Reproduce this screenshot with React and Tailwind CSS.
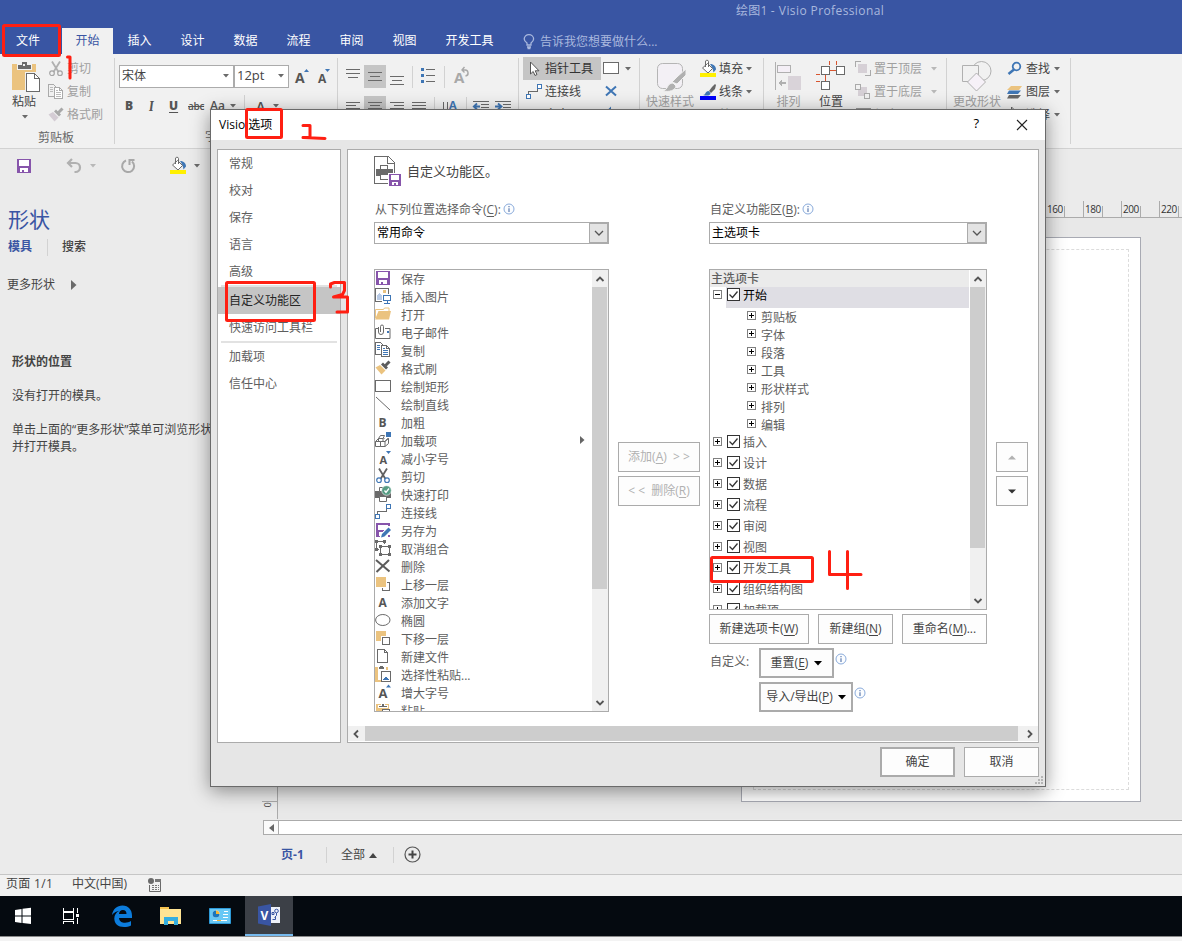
import React from "react";

const G = "#6a6a6a";
const B = "#3f76b5";
const O = "#ebc37f";
const P = "#8755ab";

function Svg({ w = 16, h = 16, className = "", children, crisp = true }) {
  return (
    <svg width={w} height={h} viewBox={`0 0 ${w} ${h}`} fill="none" shapeRendering={crisp ? "crispEdges" : "auto"} className={"shrink-0 overflow-visible " + className}>
      {children}
    </svg>
  );
}

const Down = ({ c = "#6a6a6a", className = "" }) => (
  <Svg w={6} h={4} className={className} crisp={false}><path d="M0 0h6L3 3.5z" fill={c} /></Svg>
);

const Sep = ({ className = "" }) => <div className={"w-px shrink-0 bg-[#d2d2d2] " + className} />;

const saveShape = (
  <>
    <path d="M1 1h14v14H1z" fill={P} />
    <path d="M3 2h10v6H3z" fill="#fff" />
    <path d="M4 10h8v4H4z" fill="#fff" />
    <path d="M6 12h2v3H6zM4 14h8v1H4z" fill={P} />
  </>
);

function Scissors({ a = "#606060", b = B }) {
  return (
    <Svg crisp={false}>
      <path d="M4 0.5l6.5 10.5M12 0.5L5.5 11" stroke={a} strokeWidth="1.8" />
      <circle cx="4" cy="12.2" r="2.3" stroke={b} strokeWidth="1.2" />
      <circle cx="12" cy="12.2" r="2.3" stroke={b} strokeWidth="1.2" />
    </Svg>
  );
}

function Copy({ a = G, b = B }) {
  return (
    <Svg>
      <path d="M6.5 12.5h-6v-12h5l3 3" stroke={a} />
      <path d="M6.5 3.5h5l3 3v8h-8z" stroke={a} fill="#fff" />
      <path d="M11.5 3.5v3h3" stroke={a} />
      <path d="M2 3.5h3M2 5.5h3M2 7.5h3M8 6.5h2M8 8.5h5M8 10.5h5M8 12.5h5" stroke={b} />
    </Svg>
  );
}

function Brush({ a = "#5c5c5c", b = O }) {
  return (
    <Svg crisp={false}>
      <path d="M.5 7.500L5 5l5.500 5.500L6.500 14.500z" fill={b} />
      <path d="M6 4.500l2-2L13 7.500l-2 2z" fill={a} />
      <path d="M10.500 3.500l1 1L14.500 1.500M11.500 4.500l3-3" stroke={a} strokeWidth="3" />
    </Svg>
  );
}

const Connector = () => (
  <Svg>
    <path d="M2.500 10V7.500h9V5" stroke="#6a6a6a" />
    <path d="M0.500 10.500h4v4h-4zM11.500 0.500h4v4h-4z" stroke={B} fill="#fff" />
  </Svg>
);

const letter = (t, x, y, s) => (
  <text x={x} y={y} fontSize={s} fontWeight="700" fill="#555" fontFamily="Open Sans, sans-serif">{t}</text>
);

const ICONS = {
  save: <Svg>{saveShape}</Svg>,
  pic: (
    <Svg>
      <path d="M7 13.500H.500v-13h13v5" stroke={G} />
      <path d="M8 2h3v3H8z" fill={O} />
      <path d="M2 12V8l2-3 3 3v4z" fill="#b9cbe6" />
      <path d="M8.500 7.500h7v5h-7zM12 13v2M9 15.500h6" stroke={B} fill="#fff" />
    </Svg>
  ),
  open: (
    <Svg crisp={false}>
      <path d="M.5 12V3.500h8l1-1.500h4.500v3" stroke={O} />
      <path d="M0 13.500L3.500 5H16l-2 8.500z" fill={O} />
    </Svg>
  ),
  mail: (
    <Svg crisp={false}>
      <path d="M3 4.500H.500v10h14.500V4.500H10" stroke={G} />
      <path d="M12 7h2v2h-2z" fill={B} />
      <path d="M3.500 3v5a2.500 2.500 0 0 0 5 0V2.500a1.500 1.500 0 0 0-3 0V8" stroke={G} />
    </Svg>
  ),
  copy: <Copy />,
  brush: <Brush />,
  rect: <Svg><path d="M.5 2.500h15v11H.5z" stroke={G} /></Svg>,
  line: <Svg crisp={false}><path d="M1 1l14 13" stroke={G} /></Svg>,
  bold: <Svg crisp={false}>{letter("B", 3.5, 13, 12)}</Svg>,
  addin: (
    <Svg crisp={false}>
      <path d="M.5 9.500h5v5h-5zM5.500 9.500h4.500v5H5.500zM3.500 9.500v-3l2-3h4l-1.500 3v3M.5 9.500l3-3h4.500M8.500 6.500h1M10 14.500l3.500-3v-5l-3.500 3M10 9.500l2.500-3h1" stroke={G} />
      <path d="M11 0h5v5h-5z" fill={B} />
    </Svg>
  ),
  shrink: <Svg crisp={false}>{letter("A", 4.5, 14, 11)}<path d="M11 1h5l-2.500 3z" fill={B} /></Svg>,
  cut: <Scissors />,
  qprint: (
    <Svg crisp={false}>
      <path d="M0 5h16v7H0z" fill="#6a6a6a" />
      <path d="M4.500 1.500h6v4h-6zM4.500 10.500h7v5h-7z" stroke={G} fill="#fff" />
      <circle cx="11.500" cy="4.500" r="4.800" fill="#569c84" stroke="#fff" strokeWidth=".6" />
      <path d="M9.500 4.500l1.500 2 3-4" stroke="#fff" strokeWidth="1.300" />
    </Svg>
  ),
  conn: <Connector />,
  saveas: (
    <Svg>
      <path d="M1 1h14v14H1z" fill={P} /><path d="M3 3h10v5H3zM4 10h6v4H4z" fill="#fff" />
      <path d="M5 15l1-4 8-8 2 3v9z" fill="#fff" /><path d="M6 15.500l1-3.500 6.500-6.500 2.500 2.500-6.500 6.500z" fill={B} shapeRendering="auto" />
      <path d="M13 13h2v2h-2z" fill={P} />
    </Svg>
  ),
  ungroup: (
    <Svg>
      <path d="M4 9.500H1.500v-8h8v2M5.500 6.500h9v8h-9z" stroke={G} />
      <path d="M0 0h3v3H0zM8 0h3v3H8zM0 8h3v3H0zM4 5h3v3H4zM13 5h3v3h-3zM4 13h3v3H4zM13 13h3v3h-3z" fill={G} />
    </Svg>
  ),
  del: <Svg crisp={false}><path d="M1 2L14.500 13.500M1.500 14L14 2" stroke="#5c5c5c" strokeWidth="2" /></Svg>,
  fwd: <Svg><path d="M1 1h10v10H1z" fill={O} /><path d="M12 6.500h2.500v8h-7V12" stroke={G} /></Svg>,
  text: <Svg crisp={false}>{letter("A", 3.5, 13, 12)}</Svg>,
  oval: <Svg crisp={false}><ellipse cx="7.800" cy="8" rx="7.200" ry="5.500" stroke={G} /></Svg>,
  back: <Svg><path d="M1 1h10v5H6v5H1z" fill={O} /><path d="M7.500 7.500h7v7h-7z" stroke={G} /></Svg>,
  file: <Svg><path d="M2.500 1.500h7l3 3v10h-10zM9.500 1.500v3h3" stroke={G} /></Svg>,
  pastesp: (
    <Svg>
      <path d="M0 1h3v13h3v2H0zM11 1h2v3h-2z" fill={O} /><path d="M4 1l2-1 3 1v2H4z" fill={G} />
      <path d="M6.500 5.500h9v10h-9z" stroke={G} fill="#fff" /><path d="M8 14l3-4 3 4z" fill={B} />
    </Svg>
  ),
  grow: <Svg crisp={false}>{letter("A", 3.5, 14, 13)}<path d="M11 3.500h5L13.500.5z" fill={B} /></Svg>,
  paste: (
    <Svg><path d="M1 2h13v14H1z" fill={O} /><path d="M3 5V3h3V1h3v2h3v2z" fill={G} stroke="#fff" /><path d="M7.500 7.500h7v8h-7z" stroke={G} fill="#fff" /></Svg>
  ),
};

const COMMANDS = [
  ["save", "保存"], ["pic", "插入图片"], ["open", "打开"], ["mail", "电子邮件"], ["copy", "复制"], ["brush", "格式刷"],
  ["rect", "绘制矩形"], ["line", "绘制直线"], ["bold", "加粗"], ["addin", "加载项"], ["shrink", "减小字号"], ["cut", "剪切"],
  ["qprint", "快速打印"], ["conn", "连接线"], ["saveas", "另存为"], ["ungroup", "取消组合"], ["del", "删除"], ["fwd", "上移一层"],
  ["text", "添加文字"], ["oval", "椭圆"], ["back", "下移一层"], ["file", "新建文件"], ["pastesp", "选择性粘贴..."], ["grow", "增大字号"],
  ["paste", "粘贴"],
];

const Bars = ({ lines, c = "#6a6a6a" }) => (
  <Svg w={14} h={14}>
    {lines.map(([x, y, w], i) => <rect key={i} x={x} y={y} width={w} height="1" fill={c} />)}
  </Svg>
);

function TitleBar() {
  return (
    <header className="h-[54px] shrink-0 bg-[#3955a3] text-white">
      <div className="flex h-[28px] items-start pl-[736px] pt-[3px] text-[12px] leading-4 text-[#a9b8de]">
        <span className="tracking-[0.2px]">绘图1 - </span><span className="ml-1 tracking-[0.4px]">Visio Professional</span>
      </div>
      <div className="flex h-[26px] items-center pb-px text-[12px]">
        <div className="w-[62px] pr-[6px] text-center">文件</div>
        <div className="-mb-px flex h-[26px] w-[51px] items-center justify-center bg-[#f1f1f1] pb-px text-[#3955a3]">开始</div>
        {["插入", "设计", "数据", "流程", "审阅", "视图"].map((t) => <div key={t} className="w-[53px] text-center">{t}</div>)}
        <div className="w-[77px] text-center">开发工具</div>
        <Svg w={12} h={16} className="mt-[2px] ml-[15px]" crisp={false}>
          <path d="M4 11V9C2 7.500 1.200 6.500 1.200 5a4.600 4.300 0 0 1 9.400 0c0 1.500-.8 2.500-2.600 4v2zM4 13h4M4.500 14.500h3" stroke="#a9b8de" strokeWidth="1.300" />
        </Svg>
        <span className="mt-[2px] ml-[5px] text-[#a9b8de]">告诉我您想要做什么...</span>
      </div>
    </header>
  );
}

const Row = ({ icon, text, dis, arrow, className = "" }) => (
  <div className={"flex h-[23px] items-center " + (dis ? "text-[#a0a0a0] " : "") + className}>
    {icon}
    <span className="ml-[3px] whitespace-nowrap">{text}</span>
    {arrow && <Down c={dis ? "#b8b8b8" : "#6a6a6a"} className={arrow} />}
  </div>
);

const PaintIcon = ({ bar, brush }) => (
  <Svg crisp={false}>
    {brush ? (
      <>
        <path d="M15 0l1 1-1 4-4 4-2-2 3-4z" fill="#666" />
        <path d="M3 11c3 0 2-4 5.500-4l2 2c0 3-4 3-7.500 2z" fill={B} />
      </>
    ) : (
      <>
        <path d="M10 3c4 0 6 2.500 6 5.500L13.500 11.500C13 8 12 6 10 3z" fill={B} />
        <path d="M2.500 7l5-4.500 5 5-4.500 4.500zM5.500 6V1a1.500 1.500 0 0 1 3-.5V6" fill="#fff" stroke="#6a6a6a" />
      </>
    )}
    <path d="M0 12h16v4H0z" fill={bar} />
  </Svg>
);

function Ribbon() {
  return (
    <section className="flex h-[95px] shrink-0 border-b border-[#d2d2d2] bg-[#f1f1f1] text-[12px] text-[#444]">
      {/* clipboard */}
      <div className="flex w-[114px] flex-col pt-[3px]">
        <div className="flex h-[69px]">
          <div className="flex w-[48px] flex-col items-center">
            <Svg w={30} h={36} className="ml-[4px]">
              <path d="M1 7h24v26H1z" fill={O} />
              <path d="M6 12V7h4V4h6v3h4v5z" fill="#6a6a6a" stroke="#f1f1f1" />
              <path d="M12 7h2v2h-2z" fill="#f1f1f1" />
              <path d="M14 15h11v18H14z" fill="#f1f1f1" />
              <path d="M15.500 16.500h8l5 5v13h-13z" fill="#fff" stroke="#6a6a6a" />
              <path d="M23.500 16.500v5h5" stroke="#6a6a6a" />
            </Svg>
            <span className="mt-px leading-4">粘贴</span>
            <Down className="mt-[5px] ml-[2px]" />
          </div>
          <div>
            <Row dis icon={<Scissors a="#b0b0b0" b="#a5a5a5" />} text="剪切" />
            <Row dis icon={<Copy a="#aaa" b="#bbb" />} text="复制" />
            <Row dis icon={<Brush a="#a8a8a8" b="#d4ccd4" />} text="格式刷" />
          </div>
        </div>
        <div className="mt-px flex h-[22px] items-center justify-center pr-[2px] text-[#666]">剪贴板</div>
      </div>
      <Sep className="mt-1 h-[86px]" />
      {/* font */}
      <div className="flex w-[222px] flex-col">
        <div className="flex h-[34px] items-end pl-1">
          <div className="flex h-[23px] w-[115px] items-center justify-between border border-[#ababab] bg-white pr-[4px] pl-[2px]">宋体<Down /></div>
          <div className="flex h-[23px] w-[55px] items-center justify-between border border-[#ababab] bg-white pr-[4px] pl-[2px] text-[13px]">12pt<Down /></div>
          <Svg w={16} h={18} className="mb-[2px] ml-[6px]" crisp={false}>{letter("A", 0, 15, 14)}<path d="M9 4h5l-2.500-3z" fill={B} /></Svg>
          <Svg w={16} h={18} className="mb-[2px] ml-[7px]" crisp={false}>{letter("A", 0, 15, 12)}<path d="M7 1h5l-2.500 3z" fill={B} /></Svg>
        </div>
        <div className="mt-[7px] flex h-[24px] items-center pl-[10px] font-semibold text-[#555]">
          <b className="w-[10px]">B</b>
          <b className="ml-[14px] w-[8px] font-serif text-[13px] italic">I</b>
          <b className="ml-[12px] w-[9px] underline underline-offset-2">U</b>
          <span className="ml-[10px] w-[17px] text-[10px] tracking-[-0.3px] line-through">abc</span>
          <span className="ml-[5px] w-[16px]">Aa</span>
          <Down className="ml-[4px]" />
          <Sep className="ml-[8px] h-[22px]" />
          <span className="ml-[11px] text-[14px]">A</span>
          <Down className="ml-[8px]" />
        </div>
        <div className="mt-[8px] flex h-[22px] items-center justify-center pr-[18px] text-[#666]">字体</div>
      </div>
      <Sep className="mt-1 h-[86px]" />
      {/* paragraph */}
      <div className="flex w-[180px] flex-col pt-[11px]">
        <div className="flex h-[23px] items-center pl-1">
          <div className="flex h-full w-[22px] items-center justify-center pb-[8px]"><Bars lines={[[0, 3, 14], [0, 7, 14], [2, 11, 10]]} /></div>
          <div className="flex h-full w-[22px] items-center justify-center bg-[#c5c5c5]"><Bars lines={[[0, 2, 14], [2, 6, 10], [0, 10, 14]]} /></div>
          <div className="flex h-full w-[22px] items-center justify-center pt-[8px]"><Bars lines={[[0, 2, 14], [2, 6, 10], [0, 10, 14]]} /></div>
          <Sep className="ml-[4px] h-[22px]" />
          <Svg w={14} h={16} className="mb-[3px] ml-[8px]">
            <path d="M0 1h3v3H0zM0 7h3v3H0zM0 13h3v3H0z" fill={B} />
            <path d="M5 2.500h9M5 8.500h9M5 14.500h9" stroke="#6a6a6a" />
          </Svg>
          <Sep className="ml-[9px] h-[22px]" />
          <Svg w={18} h={18} className="mb-[2px] ml-[9px]" crisp={false}>
            <text x="0" y="16" fontSize="15" fontWeight="700" fill="#a8a8a8" fontFamily="Open Sans">A</text>
            <path d="M8 3h2.500a3 3 0 0 1 1 6M10.500 0L8 3l2.500 2.500" stroke="#a8a8a8" strokeWidth="1.400" />
          </Svg>
        </div>
        <div className="mt-[8px] flex h-[23px] items-center pl-1">
          {[0, 1, 2, 3].map((i) => (
            <div key={i} className={"flex h-full w-[22px] items-center justify-center " + (i === 1 ? "bg-[#c5c5c5]" : "")}>
              <Bars lines={[[0, 1, 14], [i === 1 ? 2 : i === 2 ? 4 : 0, 4, i === 3 ? 14 : 10], [0, 7, 14], [0, 10, 10]]} />
            </div>
          ))}
          <Sep className="ml-[4px] h-[22px]" />
          <Svg w={16} h={16} className="ml-[7px]" crisp={false}>
            <path d="M1.500 2v12M5.500 2v12" stroke="#6a6a6a" />
            <text x="7" y="9" fontSize="11" fontWeight="700" fill={B} fontFamily="Open Sans">A</text>
          </Svg>
          <Sep className="ml-[8px] h-[22px]" />
          {[0, 1].map((i) => (
            <Svg key={i} w={16} h={14} className="ml-[6px]" crisp={false}>
              <path d="M0 .5h16M8 3.500h8M8 6.500h8M0 10.500h16" stroke="#6a6a6a" />
              {i ? <path d="M0 5.500h6M3 2.500l3.500 3L3 8.500" stroke={B} strokeWidth="1.800" /> : <path d="M1 5.500h6M4 2.500L.8 5.500 4 8.500" stroke={B} strokeWidth="1.800" />}
            </Svg>
          ))}
        </div>
        <div className="h-[22px]" />
      </div>
      <Sep className="mt-1 h-[86px]" />
      {/* tools */}
      <div className="flex w-[120px] pt-[3px] pl-1">
        <div className="w-[78px]">
          <div className="flex h-[23px] items-center bg-[#c5c5c5] pl-[6px] text-[#333]">
            <Svg w={16} h={16} crisp={false}><path d="M1.500 1v12l2.700-2.500L6 14.500l2-1-1.800-3.700H10z" fill="#fff" stroke="#555" /></Svg>指针工具
          </div>
          <Row icon={<Connector />} text="连接线" className="pl-[3px]" />
          <Row icon={ICONS.text} text="文本" className="pl-[3px]" />
        </div>
        <div className="w-[36px]">
          <div className="flex h-[23px] items-center pl-[2px]">
            <Svg w={17} h={13}><path d="M.5 .5h15v11H.5z" fill="#fff" stroke="#6a6a6a" /></Svg><Down className="ml-[5px]" />
          </div>
          <div className="flex h-[23px] items-center pb-[2px] pl-[4px]"><Svg w={12} h={12} crisp={false}><path d="M1 1.500l10 9M1 10.500l10-9" stroke={B} strokeWidth="2" /></Svg></div>
          <div className="flex h-[23px] items-center pl-[4px]"><Svg w={12} h={14} crisp={false}><path d="M1 5l4-4v8" stroke={B} strokeWidth="2" /></Svg></div>
        </div>
      </div>
      <Sep className="mt-1 h-[86px]" />
      {/* styles */}
      <div className="flex w-[123px] pt-[3px]">
        <div className="flex w-[60px] flex-col items-center text-[#a0a0a0]">
          <Svg w={32} h={36} crisp={false}>
            <rect x="3.500" y="6.500" width="25" height="25" rx="5" fill="#f3f0f5" stroke="#b5b5b5" />
            <path d="M32 12v6l-9 9-5-2 6-6z" fill="#b0b0b0" stroke="#f1f1f1" />
            <path d="M9 34c5-1 4-8 10-8l3 3c-1 5-7 6-13 5z" fill="#b0b0b0" stroke="#f1f1f1" />
          </Svg>
          <span className="mt-px leading-4">快速样式</span>
        </div>
        <div>
          <Row icon={<PaintIcon bar="#fff000" />} text="填充" arrow="ml-[3px]" />
          <Row icon={<PaintIcon bar="#0000fa" brush />} text="线条" arrow="ml-[3px]" />
          <Row dis icon={ICONS.rect} text="效果" arrow="ml-[3px]" />
        </div>
      </div>
      <Sep className="mt-1 h-[86px]" />
      {/* arrange */}
      <div className="flex w-[182px] pt-[3px]">
        <div className="flex w-[49px] flex-col items-center text-[#a0a0a0]">
          <Svg w={27} h={36}>
            <path d="M.5 5v28" stroke="#b0b0b0" /><path d="M2.500 8.500h13v7h-13z" fill="#f4eff6" stroke="#b0b0b0" />
            <path d="M13 19h13v14H13z" fill="#d9d3d9" /><path d="M3 26l4-4v3h4v2H7v3z" fill="#b0b0b0" />
          </Svg>
          <span className="mt-px leading-4">排列</span>
        </div>
        <div className="flex w-[36px] flex-col items-center">
          <Svg w={30} h={36}>
            <path d="M9.500 13v20M5 13.500h20M0 17.500h4M13.500 4v4M20.500 4v4M0 24.500h4" stroke="#d8552f" />
            <path d="M5.500 9.500h8v8h-8zM20.500 9.500h8v8h-8zM5.500 24.500h8v8h-8z" fill="#fff" stroke="#6a6a6a" />
          </Svg>
          <span className="mt-px leading-4">位置</span>
        </div>
        <div className="pl-[6px]">
          <Row dis icon={<Svg><path d="M.5 6V.5h5.500M15.500 9v5.500h-6" stroke="#aaa" /><path d="M3 3h9v9H3z" fill="#d6d0d6" /></Svg>} text="置于顶层" arrow="ml-[9px]" />
          <Row dis icon={<Svg><path d="M3 3h9v9H3z" fill="#d6d0d6" /><path d="M.5 .5h5v5h-5zM9.500 9.500h5v5h-5z" fill="#f1f1f1" stroke="#aaa" /></Svg>} text="置于底层" arrow="ml-[9px]" />
          <Row dis icon={<Svg><path d="M1.500 1.500h13v13h-13z" stroke="#999" strokeWidth="2" /></Svg>} text="组合" arrow="ml-[9px]" />
        </div>
      </div>
      <Sep className="mt-1 h-[86px]" />
      {/* editing */}
      <div className="flex w-[123px] pt-[3px]">
        <div className="flex w-[60px] flex-col items-center text-[#a0a0a0]">
          <Svg w={30} h={36} crisp={false}>
            <circle cx="19.500" cy="14" r="9.500" stroke="#b0b0b0" />
            <path d="M.5 8.500h16v16H.5z" fill="#f1f1f1" stroke="#b0b0b0" />
            <path d="M14.500 16l9 9-9 9-9-9z" fill="#f6f1f8" stroke="#b0b0b0" />
          </Svg>
          <span className="mt-px leading-4">更改形状</span>
        </div>
        <div>
          <Row icon={<Svg crisp={false}><circle cx="9.500" cy="5.500" r="3.800" stroke={B} strokeWidth="1.800" /><path d="M7 8.500L1.500 13" stroke={B} strokeWidth="2.500" /></Svg>} text="查找" arrow="ml-[4px]" />
          <Row icon={<Svg crisp={false}><path d="M4 2h11l-3 4H0z" fill={O} /><path d="M2 6.500h12l-3 3.500H0z" fill={B} /><path d="M2 11h12l-3 3.500H0z" fill="#666" /></Svg>} text="图层" arrow="ml-[4px]" />
          <Row icon={<Svg crisp={false}><path d="M4.500 0v12l7-5z" stroke="#666" /></Svg>} text="选择" arrow="ml-[4px]" />
        </div>
      </div>
      <Sep className="mt-1 h-[86px]" />
    </section>
  );
}

function QuickBar() {
  return (
    <div className="flex h-[34px] shrink-0 items-center bg-[#ebebeb]">
      <Svg className="ml-4">{saveShape}</Svg>
      <Svg w={16} h={16} className="mb-px ml-[34px]" crisp={false}><path d="M6 1L2 5l4 4M2 5h7.500a4.500 4.500 0 0 1 0 9H8.500" stroke="#b0b0b0" strokeWidth="2.200" /></Svg>
      <Down c="#b8b8b8" className="ml-[8px]" />
      <Svg w={16} h={16} className="ml-[24px]" crisp={false}><path d="M6 2.500a6 6 0 1 0 6 1M9.500 7V2h5" stroke="#a8a8a8" strokeWidth="2" /></Svg>
      <div className="ml-[34px]"><PaintIcon bar="#fff000" /></div>
      <Down className="ml-[8px]" />
    </div>
  );
}

function Workspace() {
  return (
    <main className="flex h-[691px] shrink-0 text-[12px] text-[#444]">
      <aside className="flex w-[262px] shrink-0 flex-col bg-[#ebebeb]">
        <h1 className="mt-[21px] pl-[8px] text-[21px] leading-[30px] text-[#3955a3]">形状</h1>
        <div className="mt-[2px] flex h-[22px] items-center pl-[8px]">
          <b className="text-[#3955a3]">模具</b><Sep className="ml-[15px] h-[17px]" /><span className="ml-[14px] font-medium">搜索</span>
        </div>
        <div className="mt-[16px] flex h-[22px] items-center pl-[7px]">更多形状<Svg w={6} h={10} className="ml-[16px]" crisp={false}><path d="M0 0l5.500 5L0 10z" fill="#6a6a6a" /></Svg></div>
        <div className="flex flex-col pl-[12px] leading-[17px] whitespace-nowrap">
          <b className="mt-[57px]">形状的位置</b>
          <p className="mt-[17px]">没有打开的模具。</p>
          <p className="mt-[17px]">单击上面的“更多形状”菜单可浏览形状，<br />并打开模具。</p>
        </div>
      </aside>
      <div className="flex min-w-0 flex-1 flex-col bg-[#ebebeb]">
        <div className="mt-[18px] flex h-[17px] shrink-0 items-end border-b border-[#ababab] pl-[783px] text-[10px] leading-[15px] text-[#333]">
          {[160, 180, 200, 220].map((n) => (
            <div key={n} className="flex h-[16px] w-[38px] shrink-0 items-end border-l border-[#ababab]">
              <span className="w-[18px] pl-px tracking-[-0.5px]">{n}</span><div className="h-[11px] w-px bg-[#ababab]" />
            </div>
          ))}
        </div>
        <div className="flex h-[601px] shrink-0">
          <div className="flex w-[16px] shrink-0 flex-col items-center border-r border-[#ababab] pt-[583px] text-[9px]">
            <div className="w-full border-t border-[#ababab]" /><span className="-mt-[4px] mr-[4px] rotate-90">0</span>
          </div>
          <div className="min-w-0 flex-1 bg-[#e8e8e8] pt-[19px] pl-[463px]">
            <div className="h-[565px] w-[400px] border border-[#a8aab3] bg-white p-[11px]">
              <div className="h-full border border-dashed border-[#dcdcdc]" />
            </div>
          </div>
        </div>
        <div className="mt-px mr-0 ml-px flex h-[15px] shrink-0 border border-r-0 border-[#ababab] bg-white">
          <div className="flex w-[15px] items-center justify-center border-r border-[#ababab] bg-[#fafafa]"><Svg w={5} h={8} crisp={false}><path d="M5 0v8L0 4z" fill="#666" /></Svg></div>
        </div>
        <div className="flex h-[39px] items-center pl-[19px]">
          <b className="tracking-[0.1px] text-[#3955a3]">页-1</b><Sep className="ml-[22px] h-4" /><span className="ml-[14px]">全部</span>
          <Svg w={8} h={5} className="mt-[2px] ml-[4px]" crisp={false}><path d="M4 0l4 5H0z" fill="#444" /></Svg>
          <Sep className="ml-[16px] h-4" />
          <Svg w={17} h={17} className="ml-[10px]" crisp={false}><circle cx="8.500" cy="8.500" r="7.500" stroke="#555" strokeWidth="1.200" /><path d="M4.500 8.500h8M8.500 4.500v8" stroke="#444" strokeWidth="2" /></Svg>
        </div>
      </div>
    </main>
  );
}

function StatusBar() {
  return (
    <div className="flex h-[22px] shrink-0 items-center border-t border-[#c6c6c6] bg-[#f1f1f1] pb-[3px] pl-[6px] text-[12px] text-[#444]">
      <span className="w-[66px] tracking-[0.3px]">页面 1/1</span><span className="w-[76px]">中文(中国)</span>
      <Svg w={14} h={14} className="mt-[2px]" crisp={false}>
        <circle cx="3" cy="3" r="3" fill="#6a6a6a" /><path d="M7 1h6v3H7z" fill="#777" /><path d="M1.500 7v6.500h11V4" stroke="#6a6a6a" /><path d="M4 7.500h7M4 9.500h7M4 11.500h7" stroke="#777" strokeDasharray="2 1" />
      </Svg>
    </div>
  );
}

function Taskbar() {
  return (
    <>
      <div className="flex h-[40px] shrink-0 items-center bg-[#050a10]">
        <Svg w={18} h={18} className="ml-[14px]" crisp={false}><path d="M1 3l6.500-1v6.500H1zM8.500 1.800L17 .8v7.700H8.500zM1 9.500h6.500V16L1 15zM8.500 9.500H17V17l-8.500-1z" fill="#fff" /></Svg>
        <Svg w={18} h={18} className="ml-[30px]"><path d="M1.500 1v3h10V1M1.500 17v-3h10v3M1.500 5.500h10v7h-10zM15.500 1v5M15.500 11v6" stroke="#fff" /><path d="M14 7h3v3h-3z" fill="#fff" /></Svg>
        <Svg w={22} h={22} className="ml-[31px]" crisp={false}>
          <path d="M1 10C2 4 6 .5 11.500 .5 17.500 .5 21 5 21 10.500V13H8c.3 3.500 3 4.700 6 4.700 2.300 0 4.300-.6 6-1.700v4.500c-2 1-4.500 1.500-7 1.500-6 0-9.700-3.500-9.700-8.500 0-3.500 1.900-6.300 5-7.800C6 6 3 7 1 10zm7-1h7.500c0-2.500-1.300-4-3.600-4S8.300 6.500 8 9z" fill="#0c7cdc" fillRule="evenodd" />
        </Svg>
        <Svg w={22} h={20} className="ml-[27px]"><path d="M0 1h9v2h12v15H0z" fill="#ffe493" /><path d="M0 1h9v2H0z" fill="#f4c24f" /><path d="M4 11h14v8h-4v-4H8v4H4z" fill="#35aee0" /></Svg>
        <Svg w={22} h={16} className="ml-[27px]" crisp={false}><path d="M.5 .5h21v15H.5z" fill="#69c8f5" stroke="#2d9ad8" /><circle cx="7" cy="6" r="3.500" fill="#fff" /><path d="M7 6V2.500A3.500 3.500 0 1 0 10.500 6z" fill="#1b76bd" /><path d="M7 2.500A3.500 3.500 0 0 1 10.500 6H7z" fill="#f6b637" /><path d="M15 3.500h4M14 6.500h5M14 9.500h5" stroke="#fff" /><path d="M4 12.500h14" stroke="#fff" /><path d="M8 12.500h4" stroke="#f6b637" /></Svg>
        <div className="ml-[14px] flex h-full w-[48px] items-center justify-center border-b-2 border-[#76b9ed] bg-[#3c4047]">
          <Svg w={22} h={22} crisp={false}>
            <path d="M12 3h10v16H12z" fill="#eef1f8" /><circle cx="18.500" cy="7" r="1.800" stroke="#3955a3" /><path d="M14 8.500h2v2h-2zM18.500 9v2.500l-2 2M14.500 15.500h3v-2.500" stroke="#3955a3" />
            <path d="M0 2.500L13 0v22L0 19.500z" fill="#3955a3" />
            <text x="2.500" y="15.500" fontSize="12" fontWeight="700" fill="#fff" fontFamily="Open Sans">V</text>
          </Svg>
        </div>
      </div>
      <div className="h-[5px] shrink-0 border-t border-[#8a8a8a] bg-[#f3f3f3]" />
    </>
  );
}

const Info = ({ className = "" }) => (
  <Svg w={12} h={12} className={className} crisp={false}><circle cx="6" cy="6" r="5" stroke="#8aabdb" fill="#fbfdff" /><path d="M6 5.200V9M6 3v1.200" stroke="#4f6fa8" strokeWidth="1.100" /></Svg>
);

const Chevron = ({ d }) => <Svg w={10} h={10} crisp={false}><path d={d} stroke="#555" strokeWidth="1.800" /></Svg>;
const UP = "M1.500 7L5 3.500 8.500 7";
const DN = "M1.500 3L5 6.500 8.500 3";

function Select({ children }) {
  return (
    <div className="flex h-[22px] items-stretch justify-between border border-[#ababab] bg-white text-black">
      <span className="pl-[2px] leading-[19px]">{children}</span>
      <div className="flex w-[19px] items-center justify-center border border-[#ababab] bg-[#e3e3e3]">
        <Svg w={10} h={8} crisp={false}><path d="M1 2l4 4 4-4" stroke="#555" strokeWidth="1.300" /></Svg>
      </div>
    </div>
  );
}

function VScroll({ thumb }) {
  return (
    <div className="flex w-[16px] shrink-0 flex-col items-center bg-[#f0f0f0] pr-px">
      <div className="flex h-[17px] items-center"><Chevron d={UP} /></div>
      <div className={"w-full shrink-0 bg-[#cdcdcd] " + thumb} />
      <div className="mt-auto flex h-[17px] items-center"><Chevron d={DN} /></div>
    </div>
  );
}

function Button({ className = "", thick, dis, children }) {
  return (
    <button className={"flex h-[30px] shrink-0 items-center justify-center whitespace-nowrap bg-[#fdfdfd] " + (thick ? "border-2 " : "border ") + "border-[#ababab] " + (dis ? "text-[#b1b1b1] " : "text-[#444] ") + className}>
      {children}
    </button>
  );
}

const Expander = ({ minus }) => (
  <Svg w={9} h={9}><path d="M.5 .5h8v8h-8z" fill="#fff" stroke="#808080" /><path d={minus ? "M2 4.500h5" : "M2 4.500h5M4.500 2v5"} stroke="#000" /></Svg>
);
const Check = () => (
  <Svg w={13} h={13}><path d="M.5 .5h12v12H.5z" fill="#fff" stroke="#333" /><path d="M2.500 6.500l3 3 5-6" stroke="#333" strokeWidth="1.300" shapeRendering="auto" /></Svg>
);

function TreeTab({ label, open }) {
  return (
    <div className="flex h-[21px] items-start">
      <div className="w-[16px] pt-[3px] pl-[3px]"><Expander minus={open} /></div>
      <div className={"flex h-full flex-1 items-start pt-px pl-px " + (open ? "bg-[#dfdee4] text-black" : "")}>
        <Check /><span className="ml-[3px] leading-[16px]">{label}</span>
      </div>
    </div>
  );
}

function NavItem({ children, active }) {
  return <div className={"flex h-[27px] items-center pl-[11px] " + (active ? "bg-[#c5c5c5] text-[#262626]" : "text-[#5e5e5e]")}>{children}</div>;
}

function Dialog() {
  return (
    <div className="absolute top-[109px] left-[210px] flex h-[678px] w-[836px] flex-col border border-[#6a6a6a] bg-[#e6e6e6] text-[12px] text-[#5e5e5e] shadow-[0_4px_18px_rgba(0,0,0,0.42)]">
      <div className="flex h-[30px] shrink-0 items-center bg-white text-black">
        <span className="pl-[8px]">Visio 选项</span>
        <span className="ml-auto pr-[37px] pb-[2px] text-[13px] font-medium">?</span>
        <Svg w={12} h={12} className="mr-[17px] mb-px" crisp={false}><path d="M1 1l10 10M11 1L1 11" stroke="#222" strokeWidth="1.100" /></Svg>
      </div>
      <div className="mt-[9px] flex h-[594px] shrink-0 gap-[6px] px-[6px]">
        <nav className="w-[124px] shrink-0 border border-[#ababab] bg-white">
          {["常规", "校对", "保存", "语言", "高级"].map((t) => <NavItem key={t}>{t}</NavItem>)}
          <div className="mx-[3px] h-[2px] bg-[#e2e2e2]" />
          <NavItem active>自定义功能区</NavItem>
          <NavItem>快速访问工具栏</NavItem>
          <div className="mx-[3px] h-[2px] bg-[#e2e2e2]" />
          <NavItem>加载项</NavItem>
          <NavItem>信任中心</NavItem>
        </nav>
        <section className="flex w-[692px] shrink-0 flex-col border border-[#ababab] bg-white">
          <div className="flex h-[43px] shrink-0 items-center pt-px pl-[26px] text-[13px] text-[#444]">
            <Svg w={28} h={32}>
              <path d="M15 27.500H.5V.5h14l6 6V17M13.500 .5v7h7" stroke={G} />
              <path d="M2 13h17v7H2z" fill="#6a6a6a" />
              <path d="M6.500 9.500h7v4h-7zM6.500 18.500h8v5h-8z" fill="#fff" stroke={G} />
              <path d="M14 17h14v14H14z" fill="#fff" />
              <path d="M15 18h12v12H15z" fill={P} /><path d="M17 19h8v5h-8zM18 26h6v3h-6z" fill="#fff" /><path d="M20 27h2v2h-2z" fill={P} />
            </Svg>
            <span className="ml-[5px]">自定义功能区。</span>
          </div>
          <div className="flex h-[533px] shrink-0 pl-[26px]">
            {/* available commands */}
            <div className="flex w-[235px] shrink-0 flex-col">
              <div className="mt-[6px] flex h-[22px] items-center pl-px">从下列位置选择命令(<u className="underline-offset-2">C</u>):<Info className="mb-[2px] ml-[2px]" /></div>
              <div className="mt-px"><Select>常用命令</Select></div>
              <div className="mt-[25px] flex h-[443px] overflow-hidden border border-[#ababab]">
                <ul className="min-w-0 flex-1">
                  {COMMANDS.map(([k, t]) => (
                    <li key={k} className="flex h-[18px] items-start">
                      <div className="w-[26px]">{ICONS[k]}</div><span className="pt-px leading-[18px]">{t}</span>
                      {k === "addin" && <Svg w={5} h={8} className="mt-[4px] mr-[7px] ml-auto" crisp={false}><path d="M0 0l4.500 4L0 8z" fill="#666" /></Svg>}
                    </li>
                  ))}
                </ul>
                <VScroll thumb="h-[302px]" />
              </div>
            </div>
            {/* transfer buttons */}
            <div className="flex w-[100px] shrink-0 flex-col gap-[4px] pt-[249px] pl-[9px]">
              <Button dis className="w-[82px]">添加(<u className="underline-offset-2">A</u>)&nbsp;&nbsp;&gt;&nbsp;&gt;</Button>
              <Button dis className="w-[82px]">&lt;&nbsp;&lt;&nbsp;&nbsp;删除(<u className="underline-offset-2">R</u>)</Button>
            </div>
            {/* ribbon tree */}
            <div className="flex w-[278px] shrink-0 flex-col">
              <div className="mt-[6px] flex h-[22px] items-center pl-px">自定义功能区(<u className="underline-offset-2">B</u>):<Info className="mb-[2px] ml-[2px]" /></div>
              <div className="mt-px"><Select>主选项卡</Select></div>
              <div className="mt-[25px] flex h-[341px] shrink-0 overflow-hidden border border-[#ababab]">
                <div className="mr-px flex-1">
                  <div className="h-[17px] bg-[#ebebeb] pl-px leading-[18px] font-medium">主选项卡</div>
                  <TreeTab label="开始" open />
                  {["剪贴板", "字体", "段落", "工具", "形状样式", "排列", "编辑"].map((t) => (
                    <div key={t} className="flex h-[18px] items-start pl-[37px]"><div className="pt-[3px]"><Expander /></div><span className="ml-[5px] pt-px leading-[18px]">{t}</span></div>
                  ))}
                  {["插入", "设计", "数据", "流程", "审阅", "视图", "开发工具", "组织结构图", "加载项"].map((t) => <TreeTab key={t} label={t} />)}
                </div>
                <VScroll thumb="h-[261px]" />
              </div>
              <div className="mt-[4px] flex justify-between">
                <Button className="w-[100px] tracking-[0.1px]">新建选项卡(<u className="underline-offset-2">W</u>)</Button>
                <Button className="w-[75px]">新建组(<u className="underline-offset-2">N</u>)</Button>
                <Button className="w-[85px]">重命名(<u className="underline-offset-2">M</u>)...</Button>
              </div>
              <div className="mt-[4px] flex">
                <span className="w-[50px] pt-[5px] pl-px">自定义:</span>
                <Button thick className="w-[75px]">重置(<u className="underline-offset-2">E</u>)<Svg w={8} h={5} className="ml-[6px]" crisp={false}><path d="M0 0h8L4 4.500z" fill="#000" /></Svg></Button>
                <Info className="mt-[5px] ml-[1px]" />
              </div>
              <div className="mt-[4px] flex pl-[50px]">
                <Button thick className="w-[94px]">导入/导出(<u className="underline-offset-2">P</u>)<Svg w={8} h={5} className="ml-[5px]" crisp={false}><path d="M0 0h8L4 4.500z" fill="#000" /></Svg></Button>
                <Info className="mt-[5px] ml-[1px]" />
              </div>
            </div>
            <div className="flex flex-col gap-[4px] pt-[249px] pl-[9px]">
              <Button className="w-[32px]"><Svg w={8} h={5} crisp={false}><path d="M0 4.500h8L4 .5z" fill="#b1b1b1" /></Svg></Button>
              <Button className="w-[32px]"><Svg w={8} h={5} crisp={false}><path d="M0 .5h8L4 4.500z" fill="#333" /></Svg></Button>
            </div>
          </div>
          <div className="flex h-[15px] shrink-0 items-center bg-[#f0f0f0] pl-[3px]">
            <Chevron d="M7 1.500L3.500 5 7 8.500" /><div className="ml-[4px] h-full w-[653px] bg-[#cdcdcd]" /><div className="ml-[7px]"><Chevron d="M3 1.500L6.500 5 3 8.500" /></div>
          </div>
        </section>
      </div>
      <div className="mt-[4px] flex justify-end gap-[9px] pr-[6px]">
        <Button thick className="w-[75px]">确定</Button>
        <Button className="w-[75px]">取消</Button>
      </div>
      <Svg w={8} h={8} className="-mt-px mr-[2px] self-end"><path d="M6 0h2v2H6zM3 3h2v2H3zM6 3h2v2H6zM0 6h2v2H0zM3 6h2v2H3zM6 6h2v2H6z" fill="#b5b5b5" /></Svg>
    </div>
  );
}

function Annotations() {
  return (
    <svg width="1182" height="941" viewBox="0 0 1182 941" className="pointer-events-none absolute top-0 left-0" fill="none" stroke="#ff1f12" strokeWidth="3" strokeLinecap="round" strokeLinejoin="round">
      <rect x="3.500" y="25.500" width="56" height="30" rx="1" />
      <rect x="246.500" y="109.500" width="35" height="28" rx="1" />
      <rect x="226.500" y="282.500" width="88" height="38" rx="1" />
      <rect x="711.500" y="557.500" width="101" height="24" rx="1" />
      <path d="M67.500 57h2.500v21" />
      <path d="M303 125.500h7v12h-7M303 137.500l22 1" />
      <path d="M330.500 287v-3l4-1.500h10v8l-2 4-9 2.500h14v15h-10.500" />
      <path d="M829.500 551.500v23h31.500M847.500 551.500v37" />
    </svg>
  );
}

export default function App() {
  return (
    <div className="relative flex h-[941px] w-[1182px] flex-col overflow-hidden bg-[#ebebeb] font-['Open_Sans','Noto_Sans_CJK_SC',sans-serif]">
      <TitleBar />
      <Ribbon />
      <QuickBar />
      <Workspace />
      <StatusBar />
      <Taskbar />
      <Dialog />
      <Annotations />
    </div>
  );
}
